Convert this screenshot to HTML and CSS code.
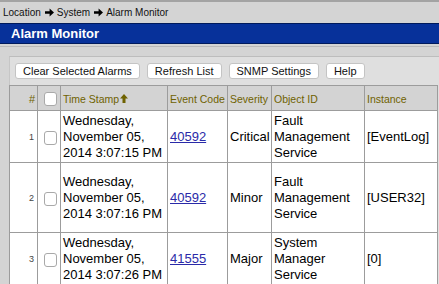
FILE: index.html
```html
<!DOCTYPE html>
<html lang="en">
  <head>
    <meta charset="UTF-8" />
    <title>Alarm Monitor</title>
    <link rel="stylesheet" href="styles.css">
  </head>
  <body>
    <div class="top-strip"></div>
    <div class="crumbs">
      <span>Location</span>
      <svg class="crumb-arrow" width="9" height="9" viewBox="0 0 9 9"><path d="M0 3.2H4.6V0.6L9 4.5L4.6 8.4V5.8H0Z" fill="#000"/></svg>
      <span>System</span>
      <svg class="crumb-arrow" width="9" height="9" viewBox="0 0 9 9"><path d="M0 3.2H4.6V0.6L9 4.5L4.6 8.4V5.8H0Z" fill="#000"/></svg>
      <span>Alarm Monitor</span>
    </div>
    <div class="title-bar">Alarm Monitor</div>

    <div class="content">
      <div class="panel">
        <div class="toolbar">
          <button class="btn">Clear Selected Alarms</button>
          <button class="btn">Refresh List</button>
          <button class="btn">SNMP Settings</button>
          <button class="btn">Help</button>
        </div>

        <table class="alarms">
          <colgroup>
            <col class="c-num" />
            <col class="c-check" />
            <col class="c-time" />
            <col class="c-code" />
            <col class="c-sev" />
            <col class="c-obj" />
            <col class="c-inst" />
          </colgroup>
          <thead>
            <tr>
              <th class="num">#</th>
              <th class="check"><span class="box"></span></th>
              <th>Time Stamp<svg class="sort-arrow" width="8" height="9" viewBox="0 0 8 9"><path d="M4 0L8 4.4H5.5V9H2.5V4.4H0Z" fill="#6f6200"/></svg></th>
              <th>Event Code</th>
              <th>Severity</th>
              <th>Object ID</th>
              <th>Instance</th>
            </tr>
          </thead>
          <tbody>
            <tr>
              <td class="num">1</td>
              <td class="check"><span class="box"></span></td>
              <td>Wednesday, November 05, 2014 3:07:15 PM</td>
              <td><a href="#">40592</a></td>
              <td>Critical</td>
              <td>Fault Management Service</td>
              <td>[EventLog]</td>
            </tr>
            <tr class="tall">
              <td class="num">2</td>
              <td class="check"><span class="box"></span></td>
              <td>Wednesday, November 05, 2014 3:07:16 PM</td>
              <td><a href="#">40592</a></td>
              <td>Minor</td>
              <td>Fault Management Service</td>
              <td>[USER32]</td>
            </tr>
            <tr>
              <td class="num">3</td>
              <td class="check"><span class="box"></span></td>
              <td>Wednesday, November 05, 2014 3:07:26 PM</td>
              <td><a href="#">41555</a></td>
              <td>Major</td>
              <td>System Manager Service</td>
              <td>[0]</td>
            </tr>
          </tbody>
        </table>
      </div>
    </div>
  </body>
</html>
```

FILE: styles.css
```css
body {
    margin: 0;
    font-family: "Liberation Sans", Arial, sans-serif;
    background-color: #d4d4d4;
    overflow: hidden;
}

.top-strip {
    height: 2px;
    background: #a3a3a3;
}

.crumbs {
    height: 21px;
    padding-left: 3px;
    display: flex;
    align-items: center;
    font-size: 10px;
    color: #111;
}

.crumb-arrow {
    margin: 0 3px 0 4px;
}

.title-bar {
    height: 19px;
    line-height: 19px;
    padding-left: 11px;
    background: #07319a;
    border-top: 1px solid #001a5c;
    border-bottom: 1px solid #001a5c;
    color: white;
    font-size: 13px;
    font-weight: bold;
}

.content {
    margin-top: 2px;
    border-top: 1px solid #b9b9b9;
    padding: 9px 0 0 9px;
}

.panel {
    background: #dfdfdf;
    border-top: 1px solid #bdbdbd;
    border-left: 1px solid #c6c6c6;
}

.toolbar {
    display: flex;
    gap: 7px;
    padding: 6px 0 6px 5px;
}

.btn {
    height: 16px;
    padding: 0 7px;
    background: white;
    border: 1px solid #c4c4c4;
    border-radius: 3px;
    font-family: inherit;
    font-size: 11px;
    color: #111;
    line-height: 14px;
}

.alarms {
    border-collapse: collapse;
    table-layout: fixed;
    width: 429px;
    margin-left: -1px;
    font-size: 13px;
}

.c-num { width: 28px; }
.c-check { width: 23px; }
.c-time { width: 107px; }
.c-code { width: 60px; }
.c-sev { width: 44px; }
.c-obj { width: 93px; }
.c-inst { width: 73px; }

.alarms th,
.alarms td {
    border: 1px solid #9c9c9c;
    padding: 1px 2px;
    text-align: left;
    vertical-align: middle;
}

.alarms th {
    height: 22px;
    padding-top: 2px;
    padding-bottom: 0;
    background: #d3d3d3;
    color: #6f6200;
    font-size: 10.5px;
    font-weight: normal;
    white-space: nowrap;
}

.alarms th.num {
    text-align: right;
    font-size: 11px;
}

.alarms td {
    background: white;
    color: #000;
    line-height: 16px;
    height: 48px;
    padding: 2px 2px 1px;
}

.alarms tr.tall td {
    height: 66px;
}

.alarms td.num {
    text-align: right;
    font-size: 9px;
    color: #444;
    padding-right: 3px;
}

.check {
    text-align: center !important;
}

.box {
    display: inline-block;
    width: 11px;
    height: 12px;
    background: white;
    border: 1px solid #a9a9a9;
    border-radius: 3px;
    vertical-align: middle;
    margin-left: 2px;
}

.sort-arrow {
    margin-left: 1px;
    vertical-align: 0;
}

.alarms a {
    color: #2a2aa8;
}
```
